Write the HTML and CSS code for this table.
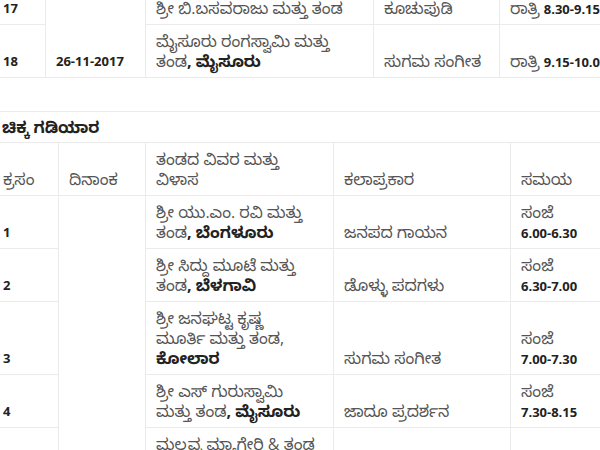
FILE: index.html
```html
<!DOCTYPE html>
<html lang="kn">
<head>
<meta charset="utf-8">
<link rel="stylesheet" href="styles.css">
</head>
<body>
<div class="page">
  <table class="sched sched-top">
    <colgroup>
      <col class="t1c1"><col class="t1c2"><col class="t1c3"><col class="t1c4"><col class="t1c5">
    </colgroup>
    <tbody>
      <tr>
        <td class="num">17</td>
        <td class="date" rowspan="2">26-11-2017</td>
        <td>ಶ್ರೀ ಬಿ.ಬಸವರಾಜು ಮತ್ತು ತಂಡ</td>
        <td>ಕೂಚುಪುಡಿ</td>
        <td class="time">ರಾತ್ರಿ <b class="lat">8.30-9.15</b></td>
      </tr>
      <tr>
        <td class="num">18</td>
        <td>ಮೈಸೂರು ರಂಗಸ್ವಾಮಿ ಮತ್ತು<br>ತಂಡ<b>, ಮೈಸೂರು</b></td>
        <td>ಸುಗಮ ಸಂಗೀತ</td>
        <td class="time">ರಾತ್ರಿ <b class="lat">9.15-10.00</b></td>
      </tr>
    </tbody>
  </table>

  <h3 class="section-title">ಚಿಕ್ಕ ಗಡಿಯಾರ</h3>

  <table class="sched sched-main">
    <colgroup>
      <col class="t2c1"><col class="t2c2"><col class="t2c3"><col class="t2c4"><col class="t2c5">
    </colgroup>
    <tbody>
      <tr>
        <td>ಕ್ರಸಂ</td>
        <td>ದಿನಾಂಕ</td>
        <td>ತಂಡದ ವಿವರ ಮತ್ತು<br>ವಿಳಾಸ</td>
        <td>ಕಲಾಪ್ರಕಾರ</td>
        <td>ಸಮಯ</td>
      </tr>
      <tr>
        <td class="num">1</td>
        <td class="date" rowspan="5"></td>
        <td>ಶ್ರೀ ಯು.ಎಂ. ರವಿ ಮತ್ತು<br>ತಂಡ<b>, ಬೆಂಗಳೂರು</b></td>
        <td>ಜನಪದ ಗಾಯನ</td>
        <td>ಸಂಜೆ<br><b class="lat">6.00-6.30</b></td>
      </tr>
      <tr>
        <td class="num">2</td>
        <td>ಶ್ರೀ ಸಿದ್ದು ಮೂಟೆ ಮತ್ತು<br>ತಂಡ<b>, ಬೆಳಗಾವಿ</b></td>
        <td>ಡೊಳ್ಳು ಪದಗಳು</td>
        <td>ಸಂಜೆ<br><b class="lat">6.30-7.00</b></td>
      </tr>
      <tr>
        <td class="num">3</td>
        <td>ಶ್ರೀ ಜನಘಟ್ಟ ಕೃಷ್ಣ<br>ಮೂರ್ತಿ ಮತ್ತು ತಂಡ,<br><b>ಕೋಲಾರ</b></td>
        <td>ಸುಗಮ ಸಂಗೀತ</td>
        <td>ಸಂಜೆ<br><b class="lat">7.00-7.30</b></td>
      </tr>
      <tr>
        <td class="num">4</td>
        <td>ಶ್ರೀ ಎಸ್ ಗುರುಸ್ವಾಮಿ<br>ಮತ್ತು ತಂಡ<b>, ಮೈಸೂರು</b></td>
        <td>ಜಾದೂ ಪ್ರದರ್ಶನ</td>
        <td>ಸಂಜೆ<br><b class="lat">7.30-8.15</b></td>
      </tr>
      <tr>
        <td class="num">5</td>
        <td>ಮಲ್ಲವ್ವ ಮ್ಯಾಗೇರಿ &amp; ತಂಡ<br>ಹಾಗೂ ಸಂಗಡಿಗರು,<br><b>ಧಾರವಾಡ</b></td>
        <td>ಜಾನಪದ</td>
        <td>ಸಂಜೆ<br><b class="lat">8.15-8.45</b></td>
      </tr>
    </tbody>
  </table>
</div>
</body>
</html>
```
FILE: styles.css
```css
html, body {
  margin: 0;
  padding: 0;
  background: #fff;
}

body {
  font-family: "Open Sans", "Noto Sans Kannada", "Noto Sans", sans-serif;
  font-size: 16px;
  line-height: 20px;
  color: #555;
  overflow: hidden;
}

.page {
  margin-top: -9px;
  margin-left: -8px;
  width: 700px;
}

.sched {
  border-collapse: collapse;
  table-layout: fixed;
}

.sched td {
  border: 1px solid #ebebeb;
  padding: 6px 10px;
  vertical-align: bottom;
  text-align: left;
  font-size: 16px;
  line-height: 20px;
}

.sched b {
  font-weight: 700;
  color: #222;
}

.sched .num,
.sched .date,
.sched .lat {
  font-size: 13px;
  font-weight: 700;
  color: #222;
}

.sched .lat {
  line-height: 1;
}

.sched .time {
  white-space: nowrap;
}

.sched-top { width: 700px; }
.t1c1 { width: 53px; }
.t1c2 { width: 100px; }
.t1c3 { width: 228px; }
.t1c4 { width: 126px; }
.t1c5 { width: 193px; }

.section-title {
  margin: 33px 0 0;
  padding: 5px 10px;
  font-size: 16px;
  line-height: 20px;
  font-weight: 700;
  color: #222;
  border-top: 1px solid #ebebeb;
}

.sched-main { width: 700px; }
.t2c1 { width: 66px; }
.t2c2 { width: 87px; }
.t2c3 { width: 188px; }
.t2c4 { width: 177px; }
.t2c5 { width: 182px; }
```
